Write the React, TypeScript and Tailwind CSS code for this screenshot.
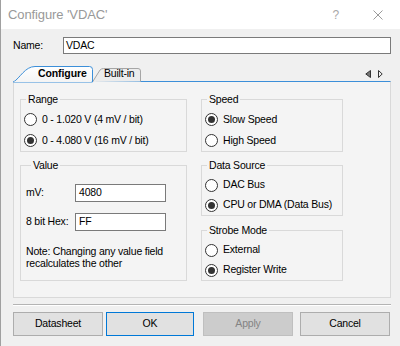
import React from 'react';

const Radio: React.FC<{ label: string; checked?: boolean; tall?: boolean }> = ({ label, checked, tall }) => (
  <div className={`flex items-center gap-[5px] pl-[3px] ${tall ? 'h-[21px]' : 'h-[20px]'}`}>
    <span className="w-[13px] h-[13px] rounded-full border border-[#333333] bg-white flex items-center justify-center shrink-0">
      {checked && <span className="w-[7px] h-[7px] rounded-full bg-[#333333]" />}
    </span>
    <span>{label}</span>
  </div>
);

const Group: React.FC<{ title: string; className: string; children: React.ReactNode }> = ({ title, className, children }) => (
  <fieldset className={`border border-[#d9d9d9] ${className}`}>
    <legend className="ml-[5px] px-[2px] leading-[16px]">{title}</legend>
    {children}
  </fieldset>
);

const Button: React.FC<{ label: string; kind?: 'default' | 'disabled'; className?: string }> = ({ label, kind, className }) => {
  const look =
    kind === 'default'
      ? 'bg-[#e1e1e1] border-[#0078d7]'
      : kind === 'disabled'
      ? 'bg-[#cccccc] border-[#bfbfbf] text-[#838383]'
      : 'bg-[#e1e1e1] border-[#adadad]';
  return (
    <div className={`h-[24px] border flex items-center justify-center ${look} ${className}`}>
      {label}
    </div>
  );
};

const App: React.FC = () => {
  return (
    <div className="w-[400px] h-[346px] bg-[#f0f0f0] border-l border-[#a0a0a0] flex flex-col font-['Liberation_Sans',Arial,sans-serif] text-[10.5px] tracking-[-0.2px] text-black">
      {/* title bar */}
      <div className="h-[29px] bg-white flex items-center pl-[7px] shrink-0">
        <span className="text-[#999999] text-[13px] tracking-[-0.1px]">Configure 'VDAC'</span>
        <span className="ml-auto text-[#a8a8a8] text-[12px] mr-[34px]">?</span>
        <svg width="10" height="10" viewBox="0 0 10 10" className="mr-[17px]">
          <path d="M0.5 0.5 L9.5 9.5 M9.5 0.5 L0.5 9.5" stroke="#9a9a9a" strokeWidth="1" fill="none" />
        </svg>
      </div>

      <div className="flex flex-col pl-[12px] pr-[9px]">
        {/* name */}
        <div className="flex items-center mt-[8px] h-[17px]">
          <span className="w-[50px]">Name:</span>
          <div className="flex-1 h-[17px] bg-white border border-[#7a7a7a] flex items-center pl-[2px]">VDAC</div>
        </div>

        {/* tabs */}
        <div className="relative z-10 flex items-center h-[15px] mt-[12px] pt-[1px]">
          <svg className="absolute left-0 top-0 overflow-visible" width="378" height="16" viewBox="0 0 378 16">
            <defs>
              <linearGradient id="sel" x1="0" y1="0" x2="0" y2="1">
                <stop offset="0" stopColor="#ffffff" />
                <stop offset="1" stopColor="#f4f4f4" />
              </linearGradient>
            </defs>
            <path d="M79.5 16 L87 4 Q88.5 2.5 90.5 2.5 L125 2.5 Q127.5 2.5 127.5 5 L127.5 15.5" fill="#ececec" stroke="#a6a6a6" />
            <path d="M0.5 16 C7 12 12 0.5 22 0.5 L76.5 0.5 Q79.5 0.5 79.5 3.5 L79.5 16 Z" fill="url(#sel)" stroke="#3c8fd9" />
            <path d="M1.5 15.5 L78.5 15.5" stroke="#f4f4f4" />
          </svg>
          <span className="relative w-[79px] pl-[25px] font-bold tracking-[-0.1px]">Configure</span>
          <span className="relative w-[48px] pl-[12px]">Built-in</span>
          <svg className="relative ml-auto mr-[8px]" width="18" height="8" viewBox="0 0 18 8">
            <path d="M5.5 0.5 L0.8 4 L5.5 7.5 Z" fill="#777777" stroke="#333333" strokeWidth="1" />
            <path d="M13.5 0.5 L17.2 4 L13.5 7.5 Z" fill="none" stroke="#333333" strokeWidth="1" />
          </svg>
        </div>

        {/* panel */}
        <div className="h-[217px] bg-[#f4f4f4] border border-[#d9d9d9] border-t-[#3c8fd9] flex gap-[14px] pt-[9px] pl-[6px]">
          <div className="w-[167px] flex flex-col gap-[5px]">
            <Group title="Range" className="h-[61px] pt-[2px]">
              <Radio tall label="0 - 1.020 V (4 mV / bit)" />
              <Radio tall checked label="0 - 4.080 V (16 mV / bit)" />
            </Group>
            <Group title="Value" className="h-[124px] pt-[11px] pl-[5px]">
              <div className="flex items-center h-[18px]">
                <span className="w-[49px]">mV:</span>
                <div className="w-[91px] h-[18px] bg-white border border-[#7a7a7a] flex items-center pl-[3px]">4080</div>
              </div>
              <div className="flex items-center h-[18px] mt-[11px]">
                <span className="w-[49px]">8 bit Hex:</span>
                <div className="w-[91px] h-[18px] bg-white border border-[#7a7a7a] flex items-center pl-[3px]">FF</div>
              </div>
              <p className="mt-[14px] leading-[12px]">
                Note: Changing any value field
                <br />
                recalculates the other
              </p>
            </Group>
          </div>

          <div className="w-[142px] flex flex-col">
            <Group title="Speed" className="h-[61px] pt-[2px]">
              <Radio tall checked label="Slow Speed" />
              <Radio tall label="High Speed" />
            </Group>
            <Group title="Data Source" className="h-[59px] pt-[2px] mt-[5px]">
              <Radio label="DAC Bus" />
              <Radio checked label="CPU or DMA (Data Bus)" />
            </Group>
            <Group title="Strobe Mode" className="h-[59px] pt-[2px] mt-[6px]">
              <Radio label="External" />
              <Radio checked label="Register Write" />
            </Group>
          </div>
        </div>

        {/* separator */}
        <div className="mt-[6px] h-px bg-[#b4b4b4]" />
        <div className="h-px bg-white" />

        {/* buttons */}
        <div className="flex mt-[6px]">
          <Button label="Datasheet" className="w-[90px]" />
          <Button label="OK" kind="default" className="w-[88px] ml-[3px]" />
          <Button label="Apply" kind="disabled" className="w-[90px] ml-[9px]" />
          <Button label="Cancel" className="w-[90px] ml-[7px]" />
        </div>
      </div>
    </div>
  );
};

export default App;
